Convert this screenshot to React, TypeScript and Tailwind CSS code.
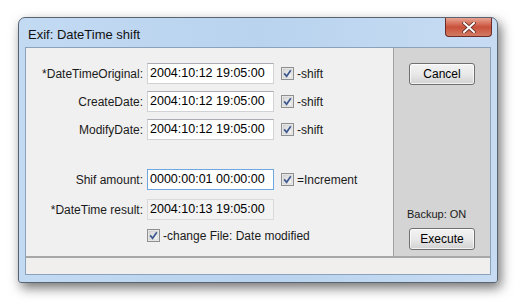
import React from 'react';

const font = { fontFamily: '"Liberation Sans", Arial, sans-serif' };

function CheckBox() {
  return (
    <svg width="13" height="13" viewBox="0 0 13 13" className="shrink-0">
      <defs>
        <linearGradient id="cbg" x1="0" y1="0" x2="1" y2="1">
          <stop offset="0" stopColor="#d6d6d6" />
          <stop offset="1" stopColor="#f8f8f8" />
        </linearGradient>
      </defs>
      <rect x="0.5" y="0.5" width="12" height="12" fill="#f4f4f4" stroke="#8e8f8f" />
      <rect x="2" y="2" width="9" height="9" fill="url(#cbg)" stroke="#c4c4c4" strokeWidth="0.6" />
      <path d="M3.2 6.4 L5.6 9.3 L9.8 3.2" fill="none" stroke="#3f5a8f" strokeWidth="1.7" />
    </svg>
  );
}

type RowProps = {
  label: string;
  value: string;
  check?: string;
  variant?: 'normal' | 'focus' | 'readonly';
};

function FieldRow({ label, value, check, variant = 'normal' }: RowProps) {
  const box =
    variant === 'focus'
      ? 'border-[#6fa8e0] bg-white'
      : variant === 'readonly'
      ? 'border-[#dadada] bg-[#f3f3f3]'
      : 'border-[#d0d2d6] border-t-[#abadb3] bg-white';
  return (
    <div className="flex items-center h-[21px]">
      <div className="w-[121px] pr-[4px] text-right text-[12px] text-[#1a1a1a] whitespace-nowrap">{label}</div>
      <div className={`w-[127px] h-[21px] border ${box} flex items-center pl-[2px] text-[12.5px] text-black`}>
        {value}
      </div>
      {check && (
        <div className="flex items-center ml-[7px] gap-[3px] text-[12px] text-[#1a1a1a]">
          <CheckBox />
          <span>{check}</span>
        </div>
      )}
    </div>
  );
}

function WinButton({ children }: { children: React.ReactNode }) {
  return (
    <div className="w-[66px] h-[22px] rounded-[3px] border border-[#707070] bg-gradient-to-b from-[#f3f3f3] via-[#e9e9e9] to-[#d2d2d2] shadow-[inset_0_0_0_1px_rgba(255,255,255,0.7)] flex items-center justify-center text-[12px] text-black">
      {children}
    </div>
  );
}

export default function App() {
  return (
    <div className="w-[520px] h-[305px] bg-white overflow-hidden" style={font}>
      <div className="ml-[18px] mt-[17px] w-[480px] h-[266px] rounded-t-[7px] rounded-b-[3px] border border-[#5a6470] bg-gradient-to-r from-[#c3daf3] via-[#b9d3ee] to-[#c7dcf3] shadow-[3px_5px_12px_rgba(0,0,0,0.55)] flex flex-col">
        {/* Title bar */}
        <div className="h-[29px] flex items-start justify-between pl-[9px] pr-[5px]">
          <div className="pt-[7px] text-[13px] text-[#111]">Exif: DateTime shift</div>
          <div className="w-[47px] h-[19px] rounded-b-[4px] border border-t-0 border-[#6b2b2b] bg-gradient-to-b from-[#e8a393] via-[#c9503a] to-[#d27a62] flex items-center justify-center">
            <svg width="14" height="11" viewBox="0 0 14 11">
              <path d="M2 1 L12 10 M12 1 L2 10" stroke="#5a2a22" strokeWidth="3.6" strokeLinecap="square" />
              <path d="M2 1 L12 10 M12 1 L2 10" stroke="#ffffff" strokeWidth="2" strokeLinecap="square" />
            </svg>
          </div>
        </div>

        {/* Client area */}
        <div className="mx-[6px] h-[228px] border border-[#8ba2bc] bg-[#f0f0f0] flex flex-col">
          <div className="flex h-[208px]">
            {/* Left form */}
            <div className="w-[367px] flex flex-col pt-[15px]">
              <FieldRow label="*DateTimeOriginal:" value="2004:10:12 19:05:00" check="-shift" />
              <div className="mt-[7px]">
                <FieldRow label="CreateDate:" value="2004:10:12 19:05:00" check="-shift" />
              </div>
              <div className="mt-[7px]">
                <FieldRow label="ModifyDate:" value="2004:10:12 19:05:00" check="-shift" />
              </div>
              <div className="mt-[29px]">
                <FieldRow label="Shif amount:" value="0000:00:01 00:00:00" check="=Increment" variant="focus" />
              </div>
              <div className="mt-[9px]">
                <FieldRow label="*DateTime result:" value="2004:10:13 19:05:00" variant="readonly" />
              </div>
              <div className="mt-[9px] ml-[121px] flex items-center gap-[3px] h-[13px] text-[12px] text-[#1a1a1a]">
                <CheckBox />
                <span>-change File: Date modified</span>
              </div>
            </div>

            {/* Right panel */}
            <div className="flex-1 bg-[#d4d4d4] border-l border-[#a0a0a0] flex flex-col pl-[15px] pt-[15px] pb-[6px]">
              <WinButton>Cancel</WinButton>
              <div className="flex-1" />
              <div className="text-[11px] text-[#1a1a1a] -ml-[2px] mb-[6px]">Backup: ON</div>
              <WinButton>Execute</WinButton>
            </div>
          </div>

          {/* Status bar */}
          <div className="flex-1 border-t-2 border-[#a8a8a8] bg-[#f0efee]" />
        </div>
      </div>
    </div>
  );
}
